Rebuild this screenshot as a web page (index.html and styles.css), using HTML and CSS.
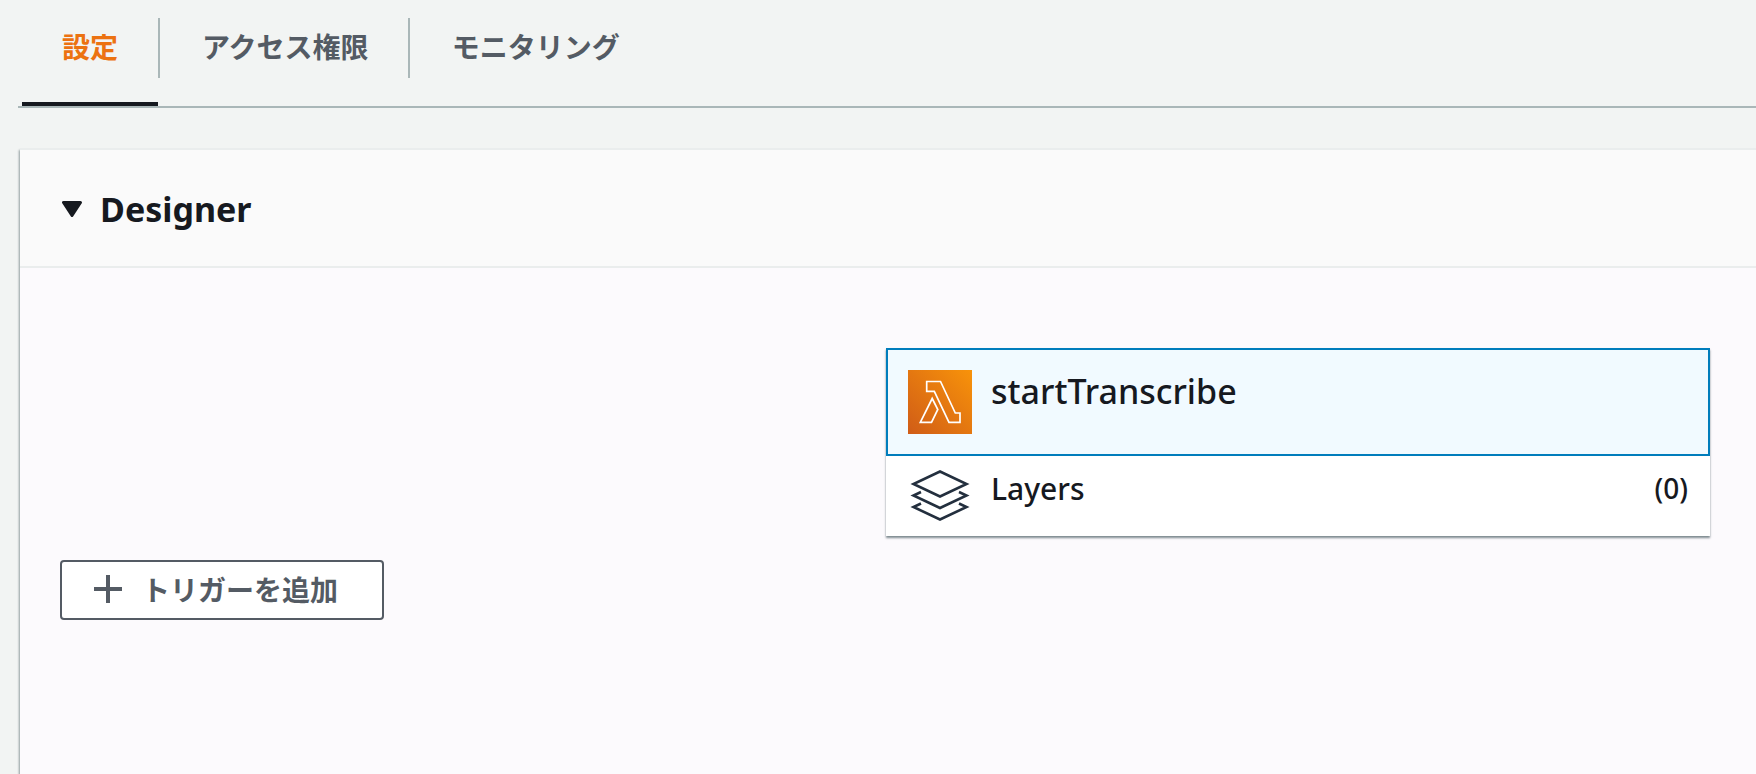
FILE: index.html
```html
<!DOCTYPE html>
<html lang="ja">
<head>
<meta charset="utf-8">
<title>startTranscribe</title>
<link rel="stylesheet" href="styles.css">
</head>
<body>
<nav class="tabs">
  <a class="tab tab-active" href="#config"><span class="tab-label">設定</span></a>
  <a class="tab" href="#permissions"><span class="tab-label">アクセス権限</span></a>
  <a class="tab" href="#monitoring"><span class="tab-label">モニタリング</span></a>
</nav>
<main class="panel">
  <header class="panel-header">
    <button class="panel-toggle" type="button" aria-expanded="true">
      <svg class="caret" viewBox="0 0 20 16" aria-hidden="true"><path d="M1.500 1.500H18.500L10 14.500Z" fill="#16191f" stroke="#16191f" stroke-width="3" stroke-linejoin="round"/></svg>
      <span>Designer</span>
    </button>
  </header>
  <section class="canvas">
    <div class="card">
      <button class="function-row" type="button">
        <svg class="function-icon" viewBox="0 0 64 64" aria-hidden="true">
          <defs><linearGradient id="orange" x1="0" y1="1" x2="1" y2="0"><stop offset="0" stop-color="#d05c17"/><stop offset="1" stop-color="#f8930a"/></linearGradient></defs>
          <rect width="64" height="64" fill="url(#orange)"/>
          <path d="M18.700 11.500H32.500L47.300 43H52V52.300H41L26.300 21.300H18.700ZM24.200 28.500L29.800 39.500L23.500 52.300H12.300Z" fill="none" stroke="#fff" stroke-width="1.700"/>
        </svg>
        <span class="function-name">startTranscribe</span>
      </button>
      <button class="layers-row" type="button">
        <svg class="layers-icon" viewBox="0 0 64 56" aria-hidden="true"><path d="M32 3.500L58.500 16L32 28.500L5.500 16ZM13 24L5.500 27.500L32 40L58.500 27.500L51 24M13 35.500L5.500 39L32 51.500L58.500 39L51 35.500" fill="none" stroke="#232f3e" stroke-width="2.600"/></svg>
        <span class="layers-name">Layers</span>
        <span class="layers-count">(0)</span>
      </button>
    </div>
    <button class="add-trigger" type="button">
      <svg class="plus" viewBox="0 0 28 28" aria-hidden="true"><path d="M14 0V28M0 14H28" stroke="#545b64" stroke-width="4"/></svg>
      <span>トリガーを追加</span>
    </button>
  </section>
</main>
</body>
</html>
```
FILE: styles.css
```css
* {
  box-sizing: border-box;
}

body {
  display: flex;
  flex-direction: column;
  min-height: 100vh;
  margin: 0;
  background: #f2f4f3;
  color: #16191f;
  font-family: "Noto Sans", "Noto Sans CJK JP", sans-serif;
}

button {
  margin: 0;
  padding: 0;
  border: 0;
  background: none;
  color: inherit;
  font: inherit;
  text-align: left;
  cursor: pointer;
}

.tabs {
  display: flex;
  height: 108px;
  margin-left: 18px;
  padding-left: 4px;
  border-bottom: 2px solid #aab7b8;
}

.tab {
  display: flex;
  padding-top: 18px;
  color: #545b64;
  font: bold 28px/56px "Noto Sans CJK JP", sans-serif;
  text-decoration: none;
}

.tab-label {
  height: 60px;
  padding: 0 39px 0 42px;
}

.tab + .tab .tab-label {
  border-left: 2px solid #aab7b8;
}

.tab-active {
  border-bottom: 4px solid #16191f;
  color: #ec7211;
}

.tab-active .tab-label {
  padding: 0 40px;
}

.panel {
  display: flex;
  flex: 1;
  flex-direction: column;
  margin: 40px 0 0 20px;
  border-top: 2px solid #eaeded;
  background: #fcfafd;
  box-shadow: -1px 2px 2px rgba(0, 28, 36, 0.4);
}

.panel-header {
  padding: 33px 40px 31px;
  border-bottom: 2px solid #eaeded;
  background: #fafafa;
}

.panel-toggle {
  display: flex;
  align-items: center;
  gap: 18px;
  padding-left: 2px;
  font-size: 34px;
  font-weight: bold;
  line-height: 52px;
}

.caret {
  width: 20px;
  height: 16px;
}

.canvas {
  display: grid;
  flex: 1;
  grid-template-columns: 1fr 1fr;
  align-content: start;
  gap: 24px 2px;
  padding: 80px 46px 80px 40px;
}

.card {
  grid-column: 2;
  background: #fff;
  box-shadow: 0 2px 2px rgba(0, 28, 36, 0.5);
}

.function-row,
.layers-row {
  display: flex;
  align-items: flex-start;
  gap: 19px;
  width: 100%;
  padding: 20px;
}

.function-row {
  border: 2px solid #007dbc;
  background: #f1faff;
}

.function-icon {
  width: 64px;
  height: 64px;
}

.function-name {
  font-size: 34px;
  font-weight: 500;
  line-height: 42px;
}

.layers-row {
  padding: 12px 22px;
}

.layers-icon {
  width: 64px;
  height: 56px;
}

.layers-name {
  flex: 1;
  font-size: 30px;
  font-weight: 500;
  line-height: 42px;
}

.layers-count {
  font-size: 28px;
  font-weight: 500;
  line-height: 40px;
}

.add-trigger {
  display: flex;
  grid-column: 1;
  align-items: center;
  justify-self: start;
  gap: 20px;
  padding: 0 44px 2px 32px;
  border: 2px solid #545b64;
  border-radius: 4px;
  background: #fff;
  color: #545b64;
  font: bold 28px/54px "Noto Sans CJK JP", sans-serif;
}

.plus {
  width: 28px;
  height: 28px;
}
```
